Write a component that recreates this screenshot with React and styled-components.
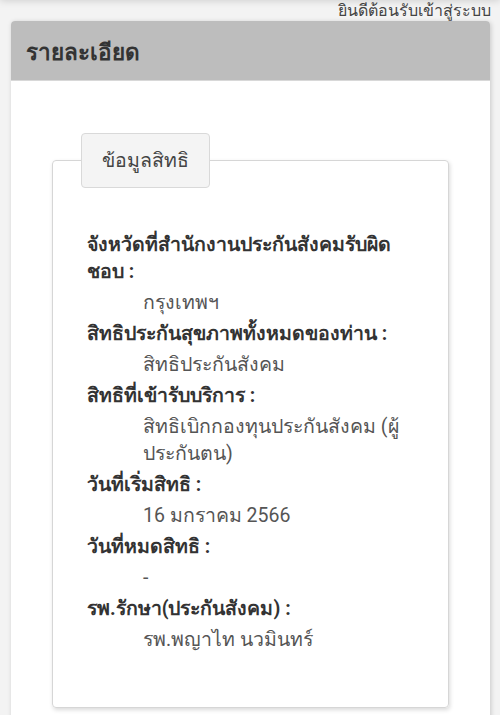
import React from "react";
import styled, { createGlobalStyle } from "styled-components";

const GlobalStyle = createGlobalStyle`
  html, body {
    margin: 0;
    padding: 0;
    background: #f3f3f3;
    font-family: "Roboto", "Noto Sans", "DejaVu Sans", sans-serif;
    color: #333;
  }
`;

const Page = styled.div`
  position: relative;
  min-height: 715px;
  padding: 0 10px 0 11px;
  overflow: hidden;

  &::before {
    content: "";
    position: absolute;
    left: 0;
    right: 0;
    top: -10px;
    height: 10px;
    box-shadow: 0 0 8px rgba(0, 0, 0, 0.18);
  }
`;

const Welcome = styled.div`
  text-align: right;
  font-size: 16px;
  line-height: 21px;
  color: #444;
  margin-right: -1px;
`;

const Panel = styled.section`
  background: #fff;
  border-radius: 4px 4px 0 0;
  box-shadow: 1px 1px 5px rgba(0, 0, 0, 0.18);
`;

const PanelHeader = styled.header`
  height: 60px;
  display: flex;
  align-items: center;
  padding: 2px 15px 0;
  box-sizing: border-box;
  background: #bdbdbd;
  border-radius: 4px 4px 0 0;
  border-bottom: 1px solid #d8d8d8;
`;

const PanelTitle = styled.h2`
  margin: 0;
  font-size: 22.5px;
  font-weight: 700;
  color: #333;
`;

const PanelBody = styled.div`
  padding: 52px 41px 20px 41px;
`;

const Fieldset = styled.fieldset`
  margin: 0;
  padding: 43px 44px 50px 34px;
  border: 1px solid #d6d6d6;
  border-radius: 4px;
  box-shadow: 1px 2px 4px rgba(0, 0, 0, 0.15);
  min-width: 0;
`;

const Legend = styled.legend`
  margin-left: -6px;
  padding: 11px 20px;
  font-size: 19.5px;
  color: #444;
  background: #f4f4f4;
  border: 1px solid #d9d9d9;
  border-radius: 4px;
`;

const InfoList = styled.dl`
  margin: 0;
`;

const Label = styled.dt`
  font-size: 19.5px;
  font-weight: 700;
  line-height: 27px;
  color: #333;
`;

const Value = styled.dd`
  margin: 4px 0 4px 56px;
  font-size: 19.5px;
  line-height: 27px;
  color: #555;
`;

const items = [
  ["จังหวัดที่สำนักงานประกันสังคมรับผิดชอบ :", "กรุงเทพฯ"],
  ["สิทธิประกันสุขภาพทั้งหมดของท่าน :", "สิทธิประกันสังคม"],
  ["สิทธิที่เข้ารับบริการ :", "สิทธิเบิกกองทุนประกันสังคม (ผู้ประกันตน)"],
  ["วันที่เริ่มสิทธิ :", "16 มกราคม 2566"],
  ["วันที่หมดสิทธิ :", "-"],
  ["รพ.รักษา(ประกันสังคม) :", "รพ.พญาไท นวมินทร์"],
];

export default function App() {
  return (
    <>
      <GlobalStyle />
      <Page>
        <Welcome>ยินดีต้อนรับเข้าสู่ระบบ</Welcome>
        <Panel>
          <PanelHeader>
            <PanelTitle>รายละเอียด</PanelTitle>
          </PanelHeader>
          <PanelBody>
            <Fieldset>
              <Legend>ข้อมูลสิทธิ</Legend>
              <InfoList>
                {items.map(([label, value]) => (
                  <React.Fragment key={label}>
                    <Label>{label}</Label>
                    <Value>{value}</Value>
                  </React.Fragment>
                ))}
              </InfoList>
            </Fieldset>
          </PanelBody>
        </Panel>
      </Page>
    </>
  );
}
